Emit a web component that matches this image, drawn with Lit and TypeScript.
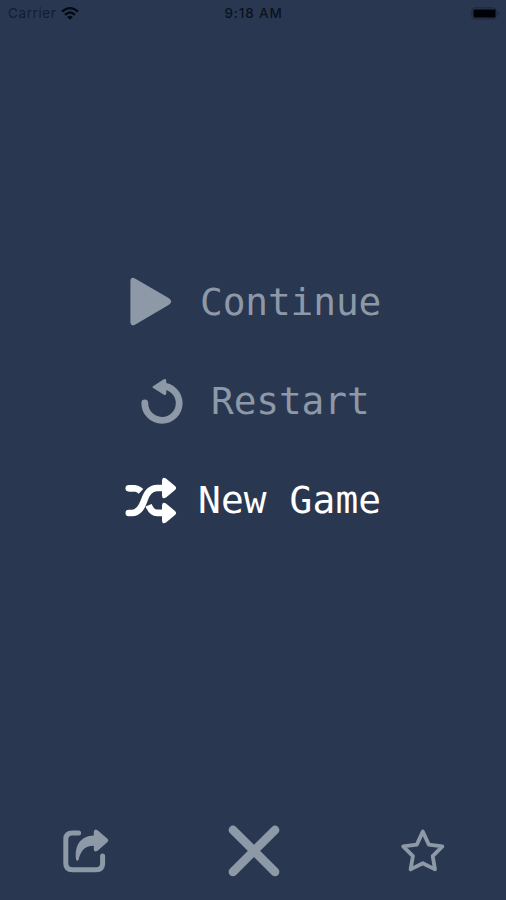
import { LitElement, html, css, svg } from "lit";
import { customElement, property } from "lit/decorators.js";

const icons = {
  play: svg`<path d="M3.4 3.5 Q3.6 -2 8.4 0.8 L41.6 20 Q46.8 23.5 41.6 27 L8.4 46.4 Q3.6 49.2 3.4 43.8 Z"/>`,
  restart: svg`<path d="M6.8 26 A17.2 17.2 0 1 0 24 9" fill="none" stroke="currentColor" stroke-width="6.8" stroke-linecap="round"/><path d="M14.8 10.8 Q13.8 9.8 15 9.2 L25.8 2.3 Q28.4 1.1 28.3 4 V16.4 Q28 19 25.5 17.4 Z"/>`,
  shuffle: svg`<g fill="none" stroke="currentColor" stroke-width="6.6" stroke-linecap="round"><path d="M3.8 12.2 H8.5 Q12.6 12.2 16 15.4" stroke-linecap="butt"/><path d="M3.8 12.2 H8"/><path d="M3.8 37 H7 C14 37 16.8 31 19 25 C21.5 16.8 25 12 32 12 H40"/><path d="M23.6 29.2 C25.6 34.2 27.7 36.9 32 36.9 H40" stroke-linecap="butt"/></g><path d="M37 4.6 Q37.2 0.4 41 2.6 L50 10 Q52.2 12 50 14 L41 21.6 Q37.2 23.8 37 19.6 Z M37 29.4 Q37.2 25.2 41 27.4 L50 35 Q52.2 37 50 39 L41 46.6 Q37.2 48.8 37 44.6 Z"/>`,
  share: svg`<path d="M16.6 5 H10.5 Q3.8 5 3.8 11.4 V35.6 Q3.8 41.8 10.5 41.8 H34.2 Q40.6 41.8 40.6 35.6 V28" fill="none" stroke="currentColor" stroke-width="5" stroke-linecap="round"/><path d="M14.2 32 C12 17.5 18.5 7.8 31.8 7.4 V4 Q32 0 35.6 2.2 L45.5 10.8 Q47.3 12.4 45.5 14 L35.6 22.8 Q32 25 31.8 21.2 V17.8 C23.5 17.8 18.8 22 16.6 31.8 Q15.2 33.6 14.2 32 Z"/>`,
  close: svg`<path d="M5 5 L47 46.8 M47 5 L5 46.8" fill="none" stroke="currentColor" stroke-width="8.8" stroke-linecap="round"/>`,
  star: svg`<path d="M22.8 3.6 L28.8 16.6 L42.4 18.4 L32.7 28.2 L35 41.4 L22.8 35.2 L10.6 41.4 L12.9 28.2 L3.2 18.4 L16.8 16.6 Z" fill="none" stroke="currentColor" stroke-width="3.8" stroke-linejoin="round"/>`,
};

@customElement("menu-row")
class MenuRow extends LitElement {
  @property() icon: "play" | "restart" | "shuffle" = "play";
  @property() label = "";
  static styles = css`
    :host { display: flex; align-items: center; height: 99px; color: #8e99a7; }
    :host([active]) { color: #fff; }
    svg { display: block; flex: none; fill: currentColor; overflow: visible; width: 52px; height: 48px; }
    .label { font: 37.8px/48px "DejaVu Sans Mono", monospace; white-space: pre; }
    .play { margin: 0 21px 0 127px; }
    .restart { margin: 0 21px 0 138px; }
    .shuffle { margin: 0 21px 0 125px; }
    .play + .label, .restart + .label { letter-spacing: -0.1px; }
    .shuffle + .label { letter-spacing: 0.15px; }
  `;
  render() {
    return html`<svg class=${this.icon} viewBox="0 0 52 48">${icons[this.icon]}</svg><span class="label">${this.label}</span>`;
  }
}

@customElement("app-root")
class AppRoot extends LitElement {
  static styles = css`
    :host { display: flex; flex-direction: column; height: 900px; overflow: hidden; background: #293751; }
    svg { display: block; overflow: visible; fill: currentColor; }
    .status { display: grid; grid-template-columns: 1fr auto 1fr; height: 27px; align-items: center; font: 13.5px/27px Inter, "Liberation Sans", sans-serif; color: #0b1220; }
    .carrier { display: flex; align-items: center; padding-left: 8px; gap: 5px; color: #131e30; letter-spacing: 0.6px; }
    .wifi { color: #050912; }
    .time { font-weight: 500; letter-spacing: 0.85px; margin-right: -1px; }
    .battery { justify-self: end; margin-right: 6px; }
    .menu { margin-top: 225px; flex: 1; }
    .actions { display: flex; justify-content: space-between; align-items: center; height: 98px; padding: 0 60px 0 62px; color: #8e99a7; }
  `;
  render() {
    return html`
      <header class="status">
        <div class="carrier"><span>Carrier</span>
          <svg class="wifi" width="18" height="14" viewBox="0 0 18 14"><g fill="none" stroke="currentColor" stroke-width="2.3"><path d="M1 4.7 Q9 -2.5 17 4.7"/><path d="M4 7.8 Q9 3.3 14 7.8"/></g><path d="M6.2 10 Q9 7.7 11.8 10 L9 12.8 Z"/></svg>
        </div>
        <span class="time">9:18 AM</span>
        <svg class="battery" width="29" height="13" viewBox="0 0 29 13"><rect x=".9" y=".9" width="24.2" height="11" rx="2.5" fill="none" stroke="#1c273b"/><rect x="2.5" y="2.4" width="22" height="8" rx="0.8" fill="#000207"/><path d="M26.5 4 Q29.8 6.4 26.5 8.8 Z" fill="#1c273b"/></svg>
      </header>
      <main class="menu">
        <menu-row icon="play" label="Continue"></menu-row>
        <menu-row icon="restart" label="Restart"></menu-row>
        <menu-row icon="shuffle" label="New Game" active></menu-row>
      </main>
      <footer class="actions">
        <svg width="46" height="46" viewBox="0 0 46 46">${icons.share}</svg>
        <svg width="52" height="52" viewBox="0 0 52 52">${icons.close}</svg>
        <svg width="46" height="46" viewBox="0 0 46 46">${icons.star}</svg>
      </footer>`;
  }
}
